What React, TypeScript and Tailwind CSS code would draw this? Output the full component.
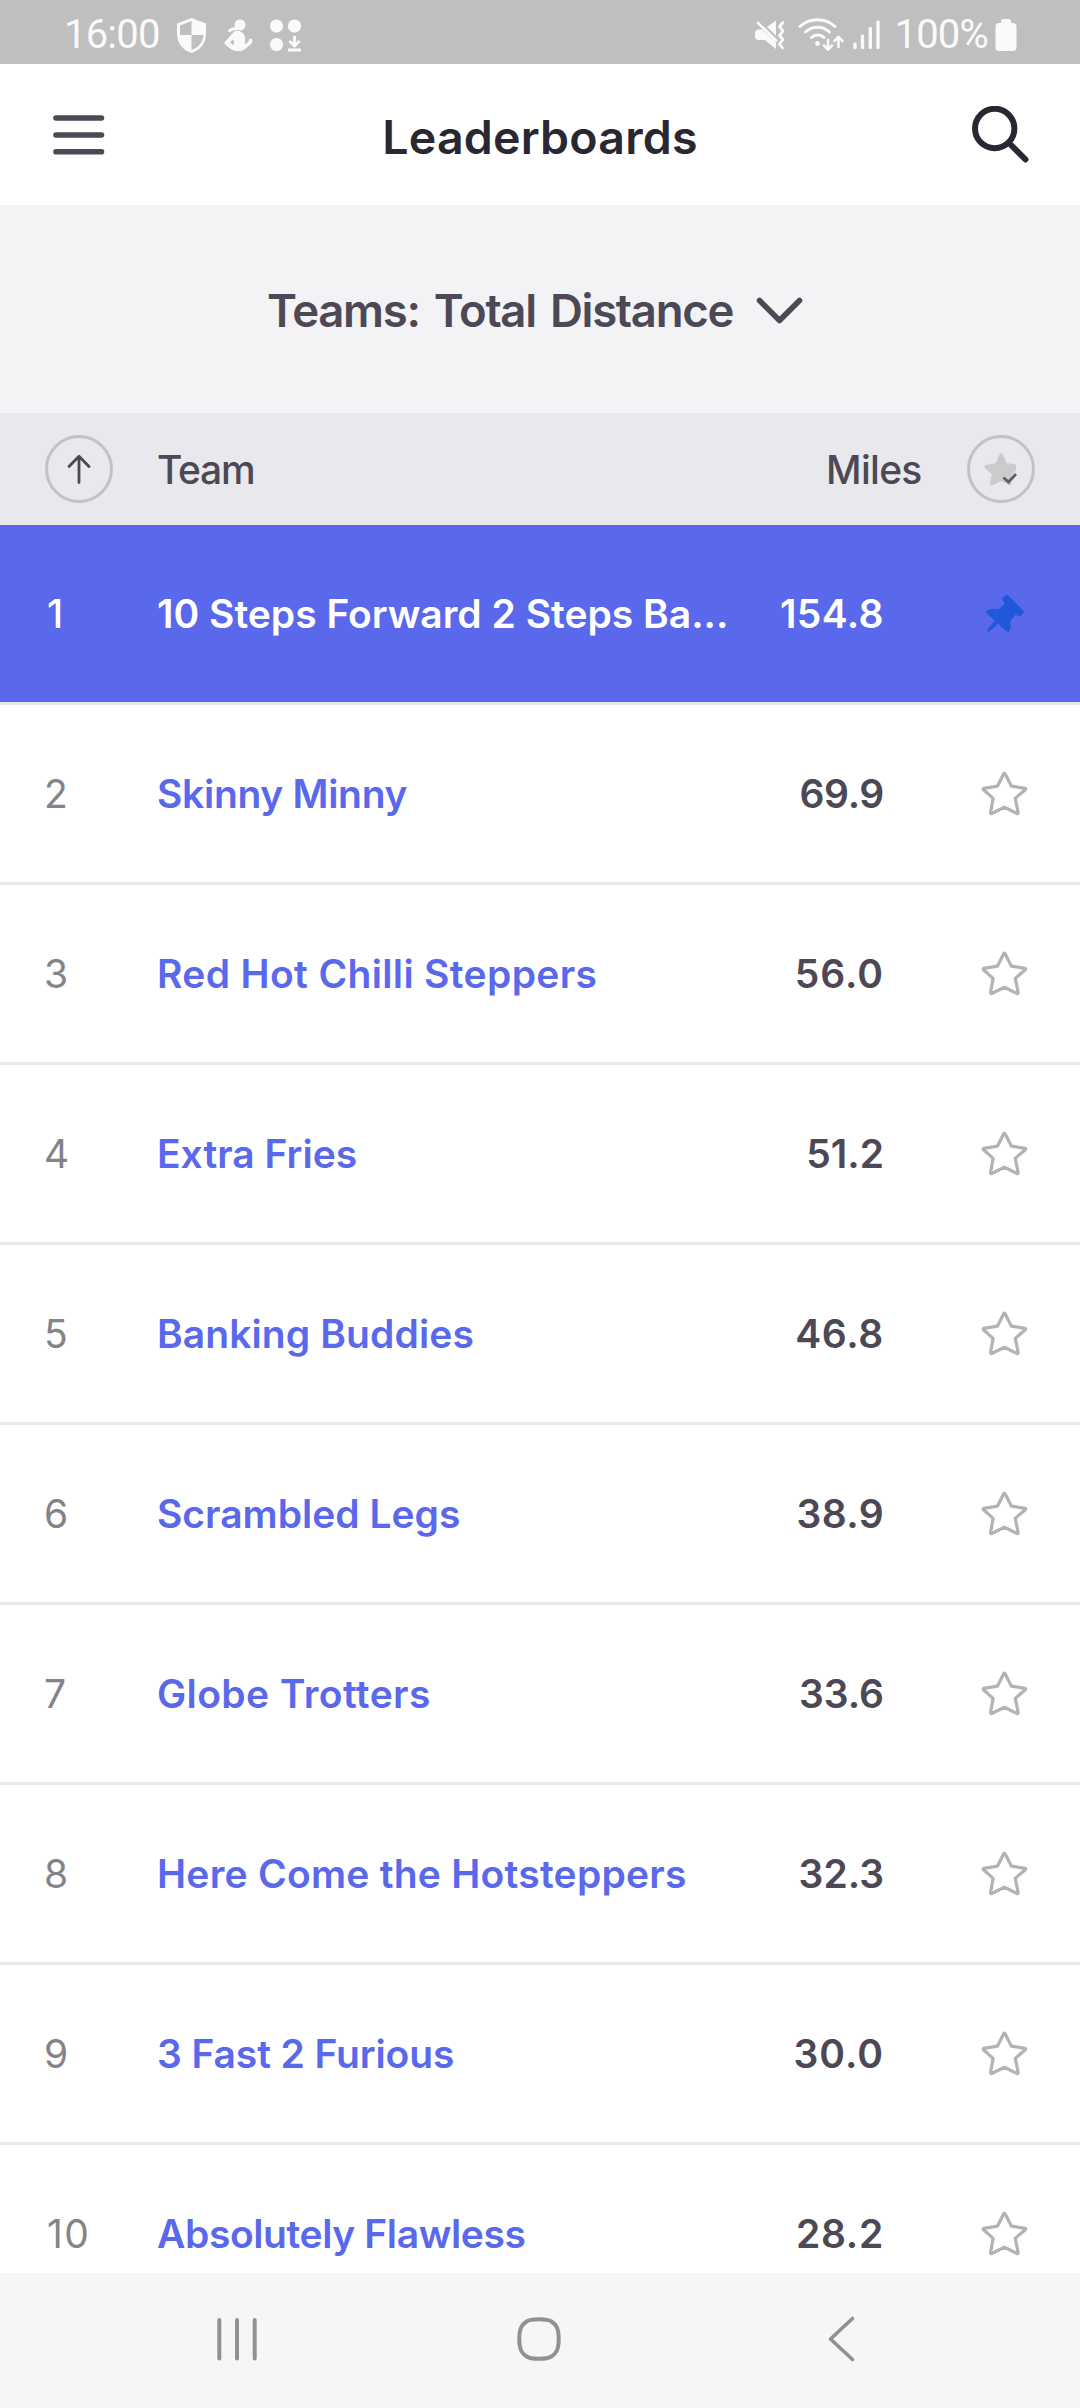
import { useState } from 'react';
import clsx from 'clsx';

interface Team {
  rank: number;
  name: string;
  miles: string;
  nameTracking?: string;
  milesTracking?: string;
}

const teams: Team[] = [
  { rank: 1, name: '10 Steps Forward 2 Steps Ba...', miles: '154.8', milesTracking: 'tracking-[0.4px]' },
  { rank: 2, name: 'Skinny Minny', miles: '69.9', nameTracking: 'tracking-[-0.3px]', milesTracking: 'tracking-[-0.3px]' },
  { rank: 3, name: 'Red Hot Chilli Steppers', miles: '56.0', nameTracking: 'tracking-[0.35px]', milesTracking: 'tracking-[1px]' },
  { rank: 4, name: 'Extra Fries', miles: '51.2' },
  { rank: 5, name: 'Banking Buddies', miles: '46.8', nameTracking: 'tracking-[0.1px]', milesTracking: 'tracking-[0.7px]' },
  { rank: 6, name: 'Scrambled Legs', miles: '38.9', milesTracking: 'tracking-[0.4px]' },
  { rank: 7, name: 'Globe Trotters', miles: '33.6', nameTracking: 'tracking-[0.4px]' },
  { rank: 8, name: 'Here Come the Hotsteppers', miles: '32.3', nameTracking: 'tracking-[0.25px]' },
  { rank: 9, name: '3 Fast 2 Furious', miles: '30.0', nameTracking: 'tracking-[-0.1px]', milesTracking: 'tracking-[1px]' },
  { rank: 10, name: 'Absolutely Flawless', miles: '28.2', nameTracking: 'tracking-[-0.4px]', milesTracking: 'tracking-[0.7px]' },
];

function StatusBar() {
  return (
    <div className="flex h-16 shrink-0 items-center justify-between bg-[#bfbfbf] pt-1.5 pr-[63px] pl-16 font-[Roboto,sans-serif] text-[40px] leading-none text-[#fafafa]">
      <div className="flex items-center">
        <span className="w-[105px] tracking-[-0.8px]">16:00</span>
        <svg width="140" height="40" viewBox="170 16 140 40" fill="currentColor">
          {/* shield */}
          <path d="M192.5 19 207 24.5V35c0 9-6 16.500-14.500 19C184 51.500 178 44 178 35V24.500z" />
          <path d="M181 26.500 192.500 22v14H204.500C203.500 44 199 49 192.500 51V36H181z" fill="#bfbfbf" />
          {/* exercising figure */}
          <circle cx="241" cy="26" r="5.500" />
          <path d="M229.500 32.500c2.500-2.500 4.500-3 8.500-3" fill="none" stroke="currentColor" strokeWidth="2.800" />
          <path d="M236 32c4-1 8 1 9.500 4.500 1 2.500 1 6-.3 8.500l3.300-1.500c1.500-.8 1-3 2-3.700 1.500-1 3 0 3 1.500-.3 3.700-2 4.500-4.500 6.200-2.500 2.500-5 4.800-9 4.800-7 0-10-3.500-14-7-.8-.8-.8-1.500 0-2.500l9-10z" />
          <path d="m234 40.500-3 3 3.500 2.800c.8-1.800.8-3.500-.5-5.800z" fill="#bfbfbf" />
          {/* app update */}
          <circle cx="277.500" cy="27" r="6.600" />
          <circle cx="295.500" cy="27" r="6.600" />
          <circle cx="277.500" cy="45.500" r="6.600" />
          <path d="M295.500 37v10m-5-5 5 5 5-5M289 51h13" fill="none" stroke="currentColor" strokeWidth="3" />
        </svg>
      </div>
      <div className="flex items-center">
        <svg width="142" height="40" viewBox="752 16 142 40" fill="currentColor">
          {/* muted speaker with vibration */}
          <path d="M755 34c0-2 1.500-3.500 3.500-3.500H762l14 13V50l-11-9h-6.500c-2 0-3.500-1.500-3.500-3.500zM767 28l9-6.500v15z" />
          <path d="m758 24 18 17.500" stroke="currentColor" strokeWidth="2.800" strokeLinecap="round" />
          <path d="m783 23.500-3.500 4 3.500 4.500-3.500 4.500 3.500 4-3.500 4.500 3 4" fill="none" stroke="currentColor" strokeWidth="2.800" strokeLinecap="round" strokeLinejoin="round" />
          {/* wifi */}
          <g fill="none" stroke="currentColor" strokeWidth="3" strokeLinecap="round" strokeLinejoin="round">
            <path d="M800 27.500c10-9 25-9 35 0M805.500 33c7-6.500 17-6.500 24 0M811.500 38.500c3.500-3.300 9-3.300 12.500 0" />
            <path d="M828 41v9m-4-3.500 4 4 4-4M838.500 48v-9m-4 3 4-4 4 4" strokeWidth="2.600" />
          </g>
          <circle cx="817.500" cy="44.500" r="2.400" />
          {/* signal */}
          <path d="M855 45v3.500M862.500 37v11.500M870.300 29.500v19M878 23v25.500" stroke="currentColor" strokeWidth="3.400" strokeLinecap="round" />
        </svg>
        <span className="tracking-[-0.8px]">100%</span>
        <svg width="22" height="36" viewBox="0 0 22 36" className="ml-[7px]" fill="currentColor">
          <rect x="6" y="2" width="10" height="8" rx="2" />
          <rect x="0.500" y="6" width="21" height="28" rx="3.500" />
        </svg>
      </div>
    </div>
  );
}

function StarIcon() {
  return (
    <svg width="50" height="50" viewBox="0 0 50 50" fill="none" stroke="#b3b3b3" strokeWidth="3.200" strokeLinejoin="round">
      <path d="M23.700 4.700Q24.400 3.400 25.100 4.700L31.400 17.200 45 19.300Q46.200 19.700 45.300 20.700L35.200 29.400 38.200 43.600Q38.200 45 37 44.500L24.400 38.300 11.800 44.500Q10.600 45 10.600 43.600L13.100 29.400 3.500 20.700Q2.600 19.700 3.800 19.300L17.400 17.200z" />
    </svg>
  );
}

function PinIcon() {
  return (
    <svg width="39" height="39" viewBox="0 0 39 39" fill="#2158db">
      <path d="M16.700 6.500c-.8-1-.7-1.800 0-2.600l2.500-2.500c1-1 2-.9 3 0l15 15c1 1 1 2 0 3l-2.600 2.500c-1 .9-2 .7-2.800 0l-1.900-1.700-5.600 7.300c.8 3.500.7 6.700-.7 9.300-.8 1.300-2.300 1.300-3.500.3L12 29.800l-7.500 6.700c-1 .8-2 1.200-3.200 1.200 0-1.200.2-2.200 1-3.200L8.500 26.700.7 19.300c-1-1-.9-2 .2-2.700 3.500-2 7.300-2.200 11.300-1.100l6.500-5.800z" />
    </svg>
  );
}

function TeamRow({ team }: { team: Team }) {
  const [starred, setStarred] = useState(false);
  const pinned = team.rank === 1;

  return (
    <div
      className={clsx(
        'flex h-[180px] shrink-0 items-center border-b-[3px] border-[#e8e7ed] pl-11 text-[39px] leading-none',
        pinned ? 'bg-[#5a68ec] text-white' : 'bg-white'
      )}
    >
      <span className={clsx('w-[113px]', pinned ? 'pl-[3px] font-medium' : 'text-[#84828b]', team.rank === 10 && 'pl-[3px] tracking-[1.500px]')}>
        {team.rank}
      </span>
      <span className={clsx('w-[580px] whitespace-nowrap font-semibold', !pinned && 'text-[#5a68ec]', team.nameTracking)}>
        {team.name}
      </span>
      <span className={clsx('w-[147px] text-right font-semibold', !pinned && 'text-[#4c4855]', team.milesTracking)}>
        {team.miles}
      </span>
      {pinned ? (
        <span className="ml-[102px]">
          <PinIcon />
        </span>
      ) : (
        <button onClick={() => setStarred(!starred)} className={clsx('ml-24', starred && 'opacity-60')}>
          <StarIcon />
        </button>
      )}
    </div>
  );
}

export default function App() {
  return (
    <div className="flex h-[2408px] w-[1080px] flex-col overflow-hidden bg-white font-[Inter,sans-serif]">
      <StatusBar />

      <header className="flex h-[141px] shrink-0 items-center justify-between pr-[51px] pl-[53px]">
        <svg width="52" height="44" viewBox="0 0 52 44" stroke="#4c4855" strokeWidth="5.600" strokeLinecap="round">
          <path d="M3 5h45.500M3 22h45.500M3 38.800h45.500" />
        </svg>
        <h1 className="pt-[5px] pl-1 text-[46.500px] leading-none font-semibold tracking-[0.2px] text-[#292731]">Leaderboards</h1>
        <svg width="58" height="58" viewBox="0 0 58 58" fill="none" stroke="#292731" strokeWidth="6" strokeLinecap="round">
          <circle cx="23.700" cy="22.500" r="19.700" />
          <path d="M38.500 37.500 54.500 53.500" />
        </svg>
      </header>

      <button className="flex h-52 shrink-0 items-center bg-[#f3f3f6] pt-[3px] pl-[267px] text-[#4c4855]">
        <span className="w-[488px] text-left text-[45.500px] leading-none font-semibold tracking-[-1.300px] whitespace-nowrap [word-spacing:4px]">
          Teams: Total Distance
        </span>
        <svg width="48" height="30" viewBox="0 0 48 30" fill="none" stroke="currentColor" strokeWidth="5.600" strokeLinecap="round" strokeLinejoin="round">
          <path d="m4.500 4.500 20 20 20-20" />
        </svg>
      </button>

      <div className="flex h-28 shrink-0 items-center bg-[#e9e8ed] pl-[45px] text-[39px] leading-none font-medium text-[#4c4855]">
        <button className="flex size-[68px] items-center justify-center rounded-full border-[3px] border-[#c2c1c6]">
          <svg width="26" height="32" viewBox="0 0 26 32" fill="none" stroke="currentColor" strokeWidth="2.800" strokeLinecap="round" strokeLinejoin="round">
            <path d="M13 29.500v-26M3 13.500l10-10.300 10 10.300" />
          </svg>
        </button>
        <span className="ml-11 tracking-[-1.300px]">Team</span>
        <span className="ml-auto w-[98px] tracking-[-0.700px]">Miles</span>
        <button className="mr-[45px] ml-[43px] flex size-[68px] items-center justify-center rounded-full border-[3px] border-[#c2c1c6]">
          <svg width="34" height="34" viewBox="0 0 34 34">
            <path
              d="M15.500 2.500c1-1.700 2.400-1.700 3.300 0l3.700 8.500 9.500 1.500v5.500l-4.500 5V33h-2.500l-8-4-8 4H6.500c-.6-.5-.7-1-.5-2l1.800-8.500-6-5.500c-2-2-1.800-3.500.8-4.200l8.900-1.600z"
              fill="#cbcbcb"
            />
            <path d="m19.500 25.500 5 4.500 7.500-8" fill="none" stroke="#5e5e5e" strokeWidth="2.800" />
          </svg>
        </button>
      </div>

      <main className="flex min-h-0 flex-1 flex-col overflow-hidden">
        {teams.map((team) => (
          <TeamRow key={team.rank} team={team} />
        ))}
      </main>

      <nav className="flex h-[135px] shrink-0 items-center bg-[#f6f6f6] pb-[3px] pl-[215px] text-[#919191]">
        <svg width="44" height="46" viewBox="0 0 44 46" stroke="currentColor" strokeWidth="4" strokeLinecap="round">
          <path d="M4.300 4v38.500M22 4v38.500M39.700 4v38.500" />
        </svg>
        <svg width="48" height="48" viewBox="0 0 48 48" className="ml-64" fill="none" stroke="currentColor" strokeWidth="4">
          <path d="M24 4.300c6 0 9.500.2 12.500 2.200 4.500 3 7.200 6.500 7.200 17.500s-2.700 14.500-7.200 17.500c-3 2-6.500 2.200-12.500 2.200s-9.500-.2-12.500-2.200C7 38.500 4.300 35 4.300 24S7 9.500 11.500 6.500c3-2 6.500-2.200 12.500-2.200z" />
        </svg>
        <svg width="32" height="48" viewBox="0 0 32 48" className="ml-[262px]" fill="none" stroke="currentColor" strokeWidth="3.600" strokeLinecap="round" strokeLinejoin="round">
          <path d="M27.500 3.500 5.500 24l22 20.500" />
        </svg>
      </nav>
    </div>
  );
}
